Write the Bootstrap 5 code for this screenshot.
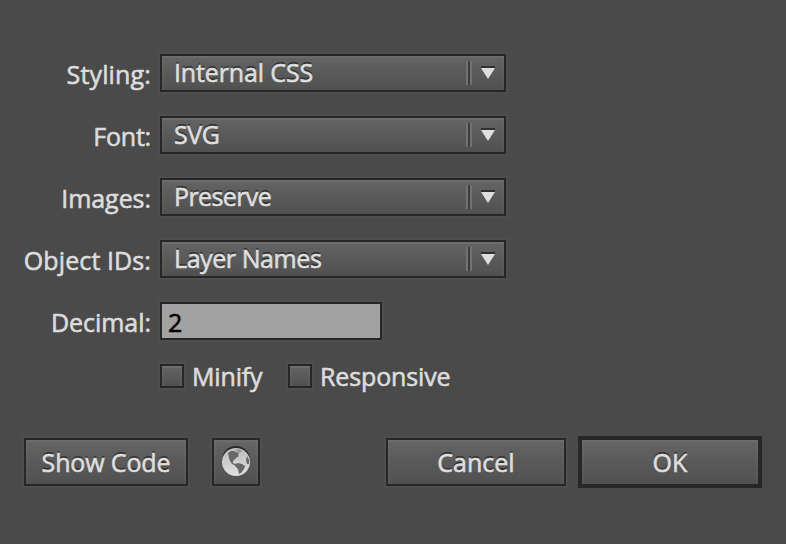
<!DOCTYPE html>
<html lang="en">
<head>
<meta charset="utf-8">
<meta name="viewport" content="width=device-width, initial-scale=1">
<title>SVG Options</title>
<link href="https://cdn.jsdelivr.net/npm/bootstrap@5.3.0/dist/css/bootstrap.min.css" rel="stylesheet">
<style>
body{background:#4a4a4a;color:#dcdcdc;font-family:"Open Sans","Noto Sans",sans-serif;font-weight:500;font-size:25px;line-height:34px;width:786px;height:544px;overflow:hidden;-webkit-text-stroke:.6px currentColor}
.dialog{padding:54px 24px 0 0}
.fields{row-gap:24px}
.field-row{height:38px}
.caption{width:151px;margin-right:9px;text-align:right;white-space:nowrap;padding-top:3px}
.face,.face:hover{background:linear-gradient(#646464,#505050);border:2px solid #272727;border-radius:0;color:#dedede;box-shadow:0 0 0 2px #4e4e4e,inset 0 2px #6c6c6c,inset 2px 0 #ffffff08,inset -2px 0 #ffffff08;text-shadow:0 -2px #333;font-size:25px;font-weight:500;line-height:34px;white-space:nowrap}
.picker{width:346px;height:38px;padding:0 8px 0 12px}
.picker span{margin-top:-2px}
.grip{width:6px;height:24px;border:solid #727272;border-width:0 2px;background:#3d3d3d;margin:-1px 8px 0 0}
.number,.number:focus{width:222px;height:38px;background:#a2a2a2;border:2px solid #272727;border-radius:0;color:#000;font-size:25px;font-weight:500;line-height:34px;padding:2px 6px 0;box-shadow:0 0 0 2px #4e4e4e}
.checks{height:24px;padding-left:160px}
.tick{width:24px;height:24px;margin-right:8px}
.actions{height:52px;margin-top:48px;padding-left:24px}
.action{height:48px;padding:0 0 1px}
.w-code{width:164px}.w-globe{width:48px}.w-cancel{width:180px;margin-right:12px}
.primary,.primary:hover{width:184px;height:52px;border-width:4px;box-shadow:inset 0 2px #6c6c6c,inset 2px 0 #ffffff08,inset -2px 0 #ffffff08}
.t1{letter-spacing:.15px}.t2{letter-spacing:-.2px}.t3,.t5{letter-spacing:-.05px}.t4{letter-spacing:.1px}
.s1,.c2,.b1{letter-spacing:-.13px}.s2{letter-spacing:-.4px}.s3{letter-spacing:-.6px}.s4{letter-spacing:-.42px}
.c1{width:72px;letter-spacing:-.15px}
</style>
</head>
<body>
<form class="dialog">
  <div class="fields d-flex flex-column">
    <div class="field-row d-flex"><label class="caption"><span class="t1">Styling:</span></label><button type="button" class="btn face picker d-flex align-items-center"><span class="me-auto s1">Internal CSS</span><i class="grip"></i><svg width="16" height="14" viewBox="0 0 16 14"><path d="M1 0h14v3H1z" fill="#303030"/><path d="M1 2h14L8 13z" fill="#dedede"/></svg></button></div>
    <div class="field-row d-flex"><label class="caption"><span class="t2">Font:</span></label><button type="button" class="btn face picker d-flex align-items-center"><span class="me-auto s2">SVG</span><i class="grip"></i><svg width="16" height="14" viewBox="0 0 16 14"><path d="M1 0h14v3H1z" fill="#303030"/><path d="M1 2h14L8 13z" fill="#dedede"/></svg></button></div>
    <div class="field-row d-flex"><label class="caption"><span class="t3">Images:</span></label><button type="button" class="btn face picker d-flex align-items-center"><span class="me-auto s3">Preserve</span><i class="grip"></i><svg width="16" height="14" viewBox="0 0 16 14"><path d="M1 0h14v3H1z" fill="#303030"/><path d="M1 2h14L8 13z" fill="#dedede"/></svg></button></div>
    <div class="field-row d-flex"><label class="caption"><span class="t4">Object IDs:</span></label><button type="button" class="btn face picker d-flex align-items-center"><span class="me-auto s4">Layer Names</span><i class="grip"></i><svg width="16" height="14" viewBox="0 0 16 14"><path d="M1 0h14v3H1z" fill="#303030"/><path d="M1 2h14L8 13z" fill="#dedede"/></svg></button></div>
    <div class="field-row d-flex"><label class="caption" for="decimal"><span class="t5">Decimal:</span></label><input id="decimal" class="form-control number" value="2"></div>
    <div class="checks d-flex align-items-center"><span class="face tick"></span><span class="c1">Minify</span><span class="face tick ms-4"></span><span class="c2">Responsive</span></div>
  </div>
  <div class="actions d-flex align-items-center">
    <button type="button" class="btn face action w-code"><span class="b1">Show Code</span></button>
    <button type="button" class="btn face action w-globe ms-4 d-flex justify-content-center pb-0 align-items-center" aria-label="Preview in browser">
      <svg width="30" height="32" viewBox="0 0 30 32"><defs><linearGradient id="g" x2="0" y2="1"><stop stop-color="#bdbdbd"/><stop offset="1" stop-color="#dfdfdf"/></linearGradient></defs><circle cx="15" cy="14" r="14" fill="#292929"/><circle cx="15" cy="16" r="14" fill="url(#g)"/><path d="M7 7l3-2 3 0 2 1 3 1-1 2 1 1-3 2-3 3 0 2 2 1 2 1-1 1-4-2-2-3-1-3zM14 18l3-1 4 1 3 2-1 3-3 4-2 1-1-5-3-3zM26 10l2 4v4l-2 0-1-4z" fill="#686868"/><path d="M14 4l5-1 2 2-3 2z" fill="#999"/></svg>
    </button>
    <button type="button" class="btn face action w-cancel ms-auto"><span class="b2">Cancel</span></button>
    <button type="button" class="btn face action primary"><span class="b3">OK</span></button>
  </div>
</form>
<script src="https://cdn.jsdelivr.net/npm/bootstrap@5.3.0/dist/js/bootstrap.bundle.min.js"></script>
</body>
</html>
